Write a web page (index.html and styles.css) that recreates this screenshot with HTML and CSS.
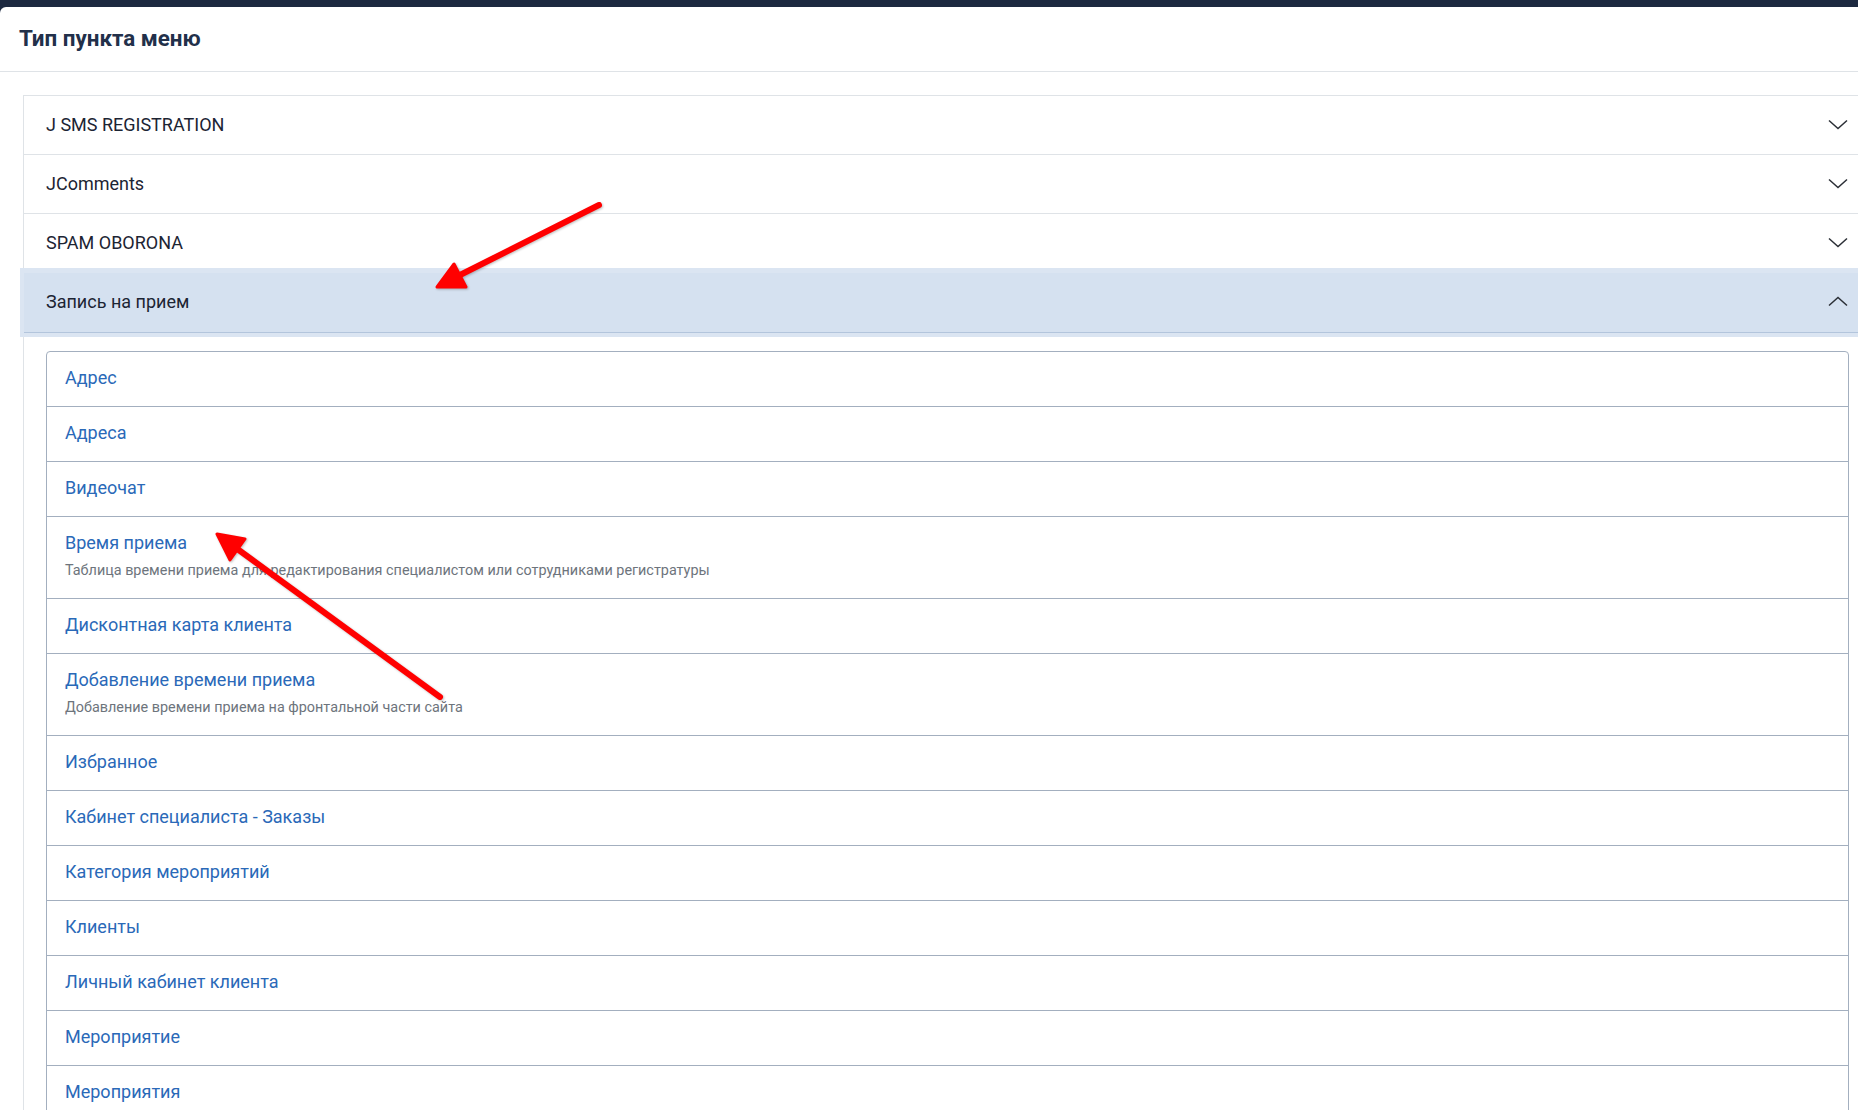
FILE: index.html
```html
<!DOCTYPE html>
<html lang="ru">
<head>
<meta charset="utf-8">
<title>Тип пункта меню</title>
<link rel="stylesheet" href="styles.css">
</head>
<body>
<div class="topbar"></div>
<div class="modal">
  <div class="modal-header">
    <h3 class="modal-title">Тип пункта меню</h3>
  </div>
  <div class="modal-body">
    <div class="accordion">
      <div class="acc-item">
        <div class="acc-header"><span>J SMS REGISTRATION</span>
          <svg class="chev" width="20" height="11" viewBox="0 0 20 11"><path d="M1 1.5 L10 9.5 L19 1.5" /></svg>
        </div>
      </div>
      <div class="acc-item">
        <div class="acc-header"><span>JComments</span>
          <svg class="chev" width="20" height="11" viewBox="0 0 20 11"><path d="M1 1.5 L10 9.5 L19 1.5" /></svg>
        </div>
      </div>
      <div class="acc-item">
        <div class="acc-header"><span>SPAM OBORONA</span>
          <svg class="chev" width="20" height="11" viewBox="0 0 20 11"><path d="M1 1.5 L10 9.5 L19 1.5" /></svg>
        </div>
      </div>
      <div class="acc-item open">
        <div class="acc-header active"><span>Запись на прием</span>
          <svg class="chev" width="20" height="11" viewBox="0 0 20 11"><path d="M1 9.5 L10 1.5 L19 9.5" /></svg>
        </div>
        <div class="acc-body">
          <ul class="list">
            <li><a href="#">Адрес</a></li>
            <li><a href="#">Адреса</a></li>
            <li><a href="#">Видеочат</a></li>
            <li><a href="#">Время приема</a><small>Таблица времени приема для редактирования специалистом или сотрудниками регистратуры</small></li>
            <li><a href="#">Дисконтная карта клиента</a></li>
            <li><a href="#">Добавление времени приема</a><small>Добавление времени приема на фронтальной части сайта</small></li>
            <li><a href="#">Избранное</a></li>
            <li><a href="#">Кабинет специалиста - Заказы</a></li>
            <li><a href="#">Категория мероприятий</a></li>
            <li><a href="#">Клиенты</a></li>
            <li><a href="#">Личный кабинет клиента</a></li>
            <li><a href="#">Мероприятие</a></li>
            <li><a href="#">Мероприятия</a></li>
          </ul>
        </div>
      </div>
    </div>
  </div>
</div>
<svg class="annot" width="1858" height="1110" viewBox="0 0 1858 1110">
  <g class="arrow">
    <line x1="599" y1="205" x2="458" y2="276" />
    <polygon points="437,287 466,287 454,264" />
  </g>
  <g class="arrow">
    <line x1="440" y1="697" x2="236" y2="548" />
    <polygon points="217,534 245,539 230,560" />
  </g>
</svg>
</body>
</html>
```

FILE: styles.css
```css
html, body {
  margin: 0;
  padding: 0;
  overflow: hidden;
}
body {
  background: #1c2940;
  font-family: Roboto, "Liberation Sans", sans-serif;
  color: #1f2a3a;
  position: relative;
  height: 1110px;
}
.topbar {
  height: 7px;
  background: #1c2940;
}
.modal {
  background: #ffffff;
  border-top-left-radius: 6px;
  min-height: 1103px;
}
.modal-header {
  height: 64px;
  border-bottom: 1px solid #dfe3e7;
  display: flex;
  align-items: center;
  padding: 0 0 2px 19px;
  box-sizing: border-box;
  height: 65px;
}
.modal-title {
  margin: 0;
  font-size: 22.4px;
  font-weight: 700;
  color: #22304a;
}
.modal-body {
  padding: 23px 0 0 23px;
}
.accordion {
  margin-right: -14px;
  border: 1px solid #dfe3e7;
  border-bottom: none;
}
.acc-item + .acc-item {
  border-top: 1px solid #dfe3e7;
}
.acc-header {
  height: 58px;
  box-sizing: border-box;
  display: flex;
  align-items: center;
  justify-content: space-between;
  padding: 0 23px 2px 22px;
  font-size: 18px;
  color: #1c2433;
  background: #ffffff;
}
.acc-item.open {
  border-top-color: #b3c5dc;
}
.acc-header.active {
  position: relative;
  z-index: 1;
  height: 60px;
  background: #d5e1f0;
  border-bottom: 1px solid #b3c5dc;
  box-shadow: 0 0 0 4px #dbe5f2, 0 -1px 0 4px #dbe5f2;
}
.chev path {
  fill: none;
  stroke: #2b2f36;
  stroke-width: 1.5;
}
.acc-body {
  padding: 18px 22px 0 22px;
}
.list {
  list-style: none;
  margin: 0;
  padding: 0;
  border: 1px solid #a3afbf;
  border-radius: 4px;
}
.list li {
  display: flex;
  flex-direction: column;
  padding: 14px 18px 16px;
}
.list li + li {
  border-top: 1px solid #a3afbf;
}
.list a {
  font-size: 18px;
  line-height: 24px;
  color: #2a69b8;
  text-decoration: none;
}
.list small {
  font-size: 14.4px;
  line-height: 22px;
  margin-top: 5px;
  color: #6d747c;
}
.annot {
  position: absolute;
  top: 0;
  left: 0;
  z-index: 10;
  pointer-events: none;
  filter: drop-shadow(1px 1px 1px rgba(0, 0, 0, 0.25));
}
.arrow line {
  stroke: #ff0000;
  stroke-width: 6;
  stroke-linecap: round;
}
.arrow polygon {
  fill: #ff0000;
  stroke: #ff0000;
  stroke-width: 3;
  stroke-linejoin: round;
}
```
